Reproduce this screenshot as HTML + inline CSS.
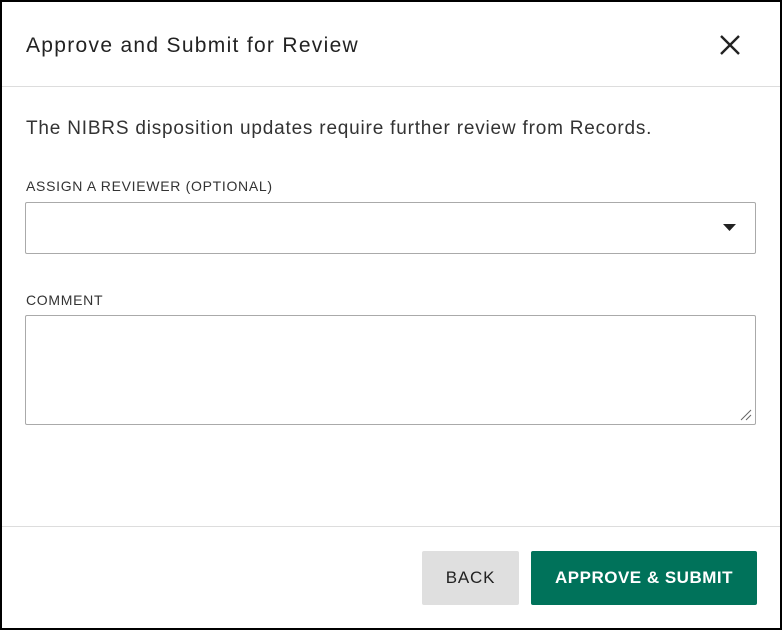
<!DOCTYPE html>
<html><head><style>
html,body{margin:0;padding:0}
body{width:782px;height:630px;position:relative;background:#fff;font-family:"Liberation Sans",sans-serif;color:#222;overflow:hidden}
.frame{position:absolute;left:0;top:0;width:778px;height:626px;border:2px solid #000}
.abs{position:absolute}
</style></head><body>
<div class="abs" style="left:26px;top:34px;font-size:21px;letter-spacing:1.3px;color:#222">Approve and Submit for Review</div>
<svg class="abs" style="left:718px;top:33px" width="24" height="24" viewBox="0 0 24 24"><path d="M3 3L21 21M21 3L3 21" stroke="#222" stroke-width="2.4"/></svg>
<div class="abs" style="left:2px;top:86px;width:778px;height:1px;background:#ddd"></div>
<div class="abs" style="left:26px;top:118px;font-size:19px;letter-spacing:0.8px;color:#333">The NIBRS disposition updates require further review from Records.</div>
<div class="abs" style="left:26px;top:178px;font-size:14px;letter-spacing:0.7px;color:#333">ASSIGN A REVIEWER (OPTIONAL)</div>
<div class="abs" style="left:25px;top:202px;width:729px;height:50px;border:1px solid #aaa;border-radius:2px"></div>
<svg class="abs" style="left:723px;top:224px" width="14" height="8"><path d="M0 0H13L6.5 7Z" fill="#222"/></svg>
<div class="abs" style="left:26px;top:292px;font-size:14px;letter-spacing:0.7px;color:#333">COMMENT</div>
<div class="abs" style="left:25px;top:315px;width:729px;height:108px;border:1px solid #aaa;border-radius:2px"></div>
<svg class="abs" style="left:740px;top:409px" width="12" height="12"><path d="M1 11L11 1M6 11L11 6" stroke="#666" stroke-width="1"/></svg>
<div class="abs" style="left:2px;top:526px;width:778px;height:1px;background:#ddd"></div>
<div class="abs" style="left:422px;top:551px;width:97px;height:54px;background:#dfdfdf;border-radius:2px;font-size:17px;letter-spacing:0.8px;line-height:54px;text-align:center;color:#222">BACK</div>
<div class="abs" style="left:531px;top:551px;width:226px;height:54px;background:#00725a;border-radius:2px;font-size:17px;font-weight:bold;letter-spacing:0.5px;line-height:54px;text-align:center;color:#fff">APPROVE &amp; SUBMIT</div>
<div class="frame"></div>
</body></html>
